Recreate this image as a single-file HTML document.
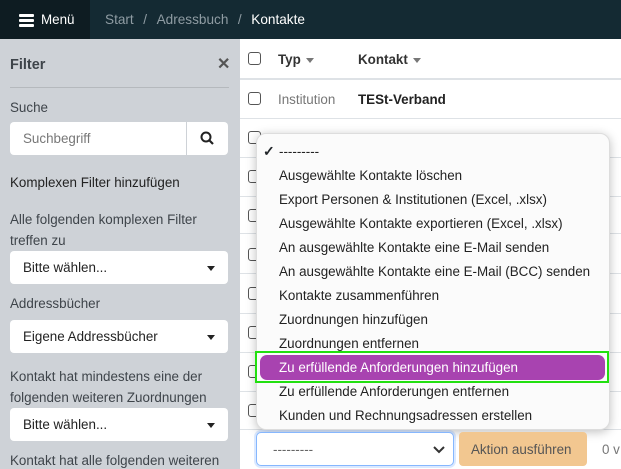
<!DOCTYPE html><html><head><meta charset="utf-8"><style>
*{box-sizing:border-box;margin:0;padding:0}
body{width:621px;height:469px;overflow:hidden;font-family:"Liberation Sans",sans-serif;background:#fff;position:relative;color:#212529;font-size:13.4px}
.top{position:absolute;left:0;top:0;width:621px;height:39px;background:#142a33}
.menu{position:absolute;left:0;top:0;width:90px;height:39px;background:#0e1c22;color:#fff;font-size:13.4px}
.menu span{position:absolute;left:41px;top:12px}
.bar{position:absolute;left:19px;width:15px;height:2.5px;background:#fff;border-radius:1px}
.crumb{position:absolute;left:105px;top:12px;font-size:13.6px;color:#8f9ca3;white-space:nowrap;word-spacing:1px}
.crumb b{font-weight:normal;color:#fff}
.side{position:absolute;left:0;top:39px;width:240px;height:430px;background:#ced2d7;color:#3e444a;font-size:13.4px}
.side .t{position:absolute;left:10px}
.inp{position:absolute;left:10px;width:218px;height:33px;background:#fff;border-radius:4px}
.caret{position:absolute;right:13px;top:15px;border-left:4.5px solid transparent;border-right:4.5px solid transparent;border-top:5px solid #222}
.hl{position:absolute;left:240px;width:381px;height:1px;background:#dee2e6}
.cb{position:absolute;left:248px;width:13px;height:13px;border:1px solid #555;border-radius:3px;background:#fff}
.dd{position:absolute;left:256px;top:133px;width:354px;height:297px;background:#fbfbfb;border-radius:10px;box-shadow:0 2px 10px rgba(0,0,0,.25);border:1px solid #ddd}
.it{position:absolute;left:279px;font-size:13.4px;color:#222;white-space:nowrap}
.sa{display:inline-block;margin-left:5px;vertical-align:middle;border-left:4px solid transparent;border-right:4px solid transparent;border-top:5px solid #777}
</style></head><body>
<div class="top"></div>
<div class="menu"><div class="bar" style="top:14px"></div><div class="bar" style="top:19px"></div><div class="bar" style="top:24px"></div><span>Menü</span></div>
<div class="crumb">Start &nbsp;/ &nbsp;Adressbuch &nbsp;/ &nbsp;<b>Kontakte</b></div>
<div class="side">
<div class="t" style="top:18px;font-weight:bold;font-size:14.5px">Filter</div>
<div style="position:absolute;left:217px;top:15px;font-size:16px;font-weight:bold;color:#555">✕</div>
<div style="position:absolute;left:10px;top:48px;width:219px;height:1px;background:#b5b9bd"></div>
<div class="t" style="top:61px">Suche</div>
<div class="inp" style="top:83px;width:176px;color:#777;padding:9px 0 0 13px;border-radius:4px 0 0 4px">Suchbegriff</div>
<div class="inp" style="top:83px;left:187px;width:41px;border-radius:0 4px 4px 0"><svg width="41" height="33"><circle cx="19" cy="15" r="4.5" fill="none" stroke="#222" stroke-width="2"/><path d="M22 18l4 4" stroke="#222" stroke-width="2.2"/></svg></div>
<div class="t" style="top:136px;color:#222">Komplexen Filter hinzufügen</div>
<div class="t" style="top:170px;line-height:21px">Alle folgenden komplexen Filter<br>treffen zu</div>
<div class="inp" style="top:212px;color:#222;padding:9px 0 0 13px">Bitte wählen...<div class="caret"></div></div>
<div class="t" style="top:257px">Addressbücher</div>
<div class="inp" style="top:281px;color:#222;padding:9px 0 0 13px">Eigene Addressbücher<div class="caret"></div></div>
<div class="t" style="top:327px;line-height:21px">Kontakt hat mindestens eine der<br>folgenden weiteren Zuordnungen</div>
<div class="inp" style="top:369px;color:#222;padding:9px 0 0 13px">Bitte wählen...<div class="caret"></div></div>
<div class="t" style="top:414px">Kontakt hat alle folgenden weiteren</div>
</div>
<div class="hl" style="top:78px;height:2px"></div>
<div class="hl" style="top:118px"></div><div class="hl" style="top:157px"></div><div class="hl" style="top:196px"></div><div class="hl" style="top:233px"></div><div class="hl" style="top:273px"></div><div class="hl" style="top:313px"></div><div class="hl" style="top:352px"></div><div class="hl" style="top:391px"></div><div class="hl" style="top:429px"></div>
<div class="cb" style="top:52px"></div><div class="cb" style="top:92px"></div><div class="cb" style="top:131px"></div><div class="cb" style="top:170px"></div><div class="cb" style="top:209px"></div><div class="cb" style="top:248px"></div><div class="cb" style="top:287px"></div><div class="cb" style="top:326px"></div><div class="cb" style="top:365px"></div><div class="cb" style="top:404px"></div>
<div style="position:absolute;left:278px;top:52px;font-weight:bold;color:#333">Typ<span class="sa"></span></div>
<div style="position:absolute;left:358px;top:52px;font-weight:bold;color:#333">Kontakt<span class="sa"></span></div>
<div style="position:absolute;left:278px;top:92px;color:#777">Institution</div>
<div style="position:absolute;left:358px;top:92px;font-weight:bold;color:#222">TESt-Verband</div>
<div class="dd"></div>
<div style="position:absolute;left:263px;top:143px;font-size:14px;font-weight:bold">✓</div>
<div class="it" style="top:144px">---------</div>
<div class="it" style="top:168px">Ausgewählte Kontakte löschen</div>
<div class="it" style="top:192px">Export Personen &amp; Institutionen (Excel, .xlsx)</div>
<div class="it" style="top:216px">Ausgewählte Kontakte exportieren (Excel, .xlsx)</div>
<div class="it" style="top:240px">An ausgewählte Kontakte eine E-Mail senden</div>
<div class="it" style="top:264px">An ausgewählte Kontakte eine E-Mail (BCC) senden</div>
<div class="it" style="top:288px">Kontakte zusammenführen</div>
<div class="it" style="top:312px">Zuordnungen hinzufügen</div>
<div class="it" style="top:336px">Zuordnungen entfernen</div>
<div style="position:absolute;left:255px;top:351px;width:354px;height:32px;border:2px solid #22e010"></div>
<div style="position:absolute;left:260px;top:355px;width:345px;height:25px;border-radius:7px;background:#a843b0"></div>
<div class="it" style="top:360px;color:#fff">Zu erfüllende Anforderungen hinzufügen</div>
<div class="it" style="top:384px">Zu erfüllende Anforderungen entfernen</div>
<div class="it" style="top:408px">Kunden und Rechnungsadressen erstellen</div>
<div style="position:absolute;left:256px;top:432px;width:198px;height:34px;border:1px solid #86b7fe;border-radius:5px;background:#fff;box-shadow:0 0 0 2px rgba(13,110,253,.15);color:#666;padding:9px 0 0 16px">---------<svg style="position:absolute;right:8px;top:13px" width="12" height="8"><path d="M1 1l5 5 5-5" fill="none" stroke="#333" stroke-width="2"/></svg></div>
<div style="position:absolute;left:459px;top:432px;width:128px;height:34px;background:#f2c790;border-radius:4px;color:#555;padding:10px 0 0 12px;white-space:nowrap">Aktion ausführen</div>
<div style="position:absolute;left:602px;top:442px;color:#777">0 v</div>
</body></html>
